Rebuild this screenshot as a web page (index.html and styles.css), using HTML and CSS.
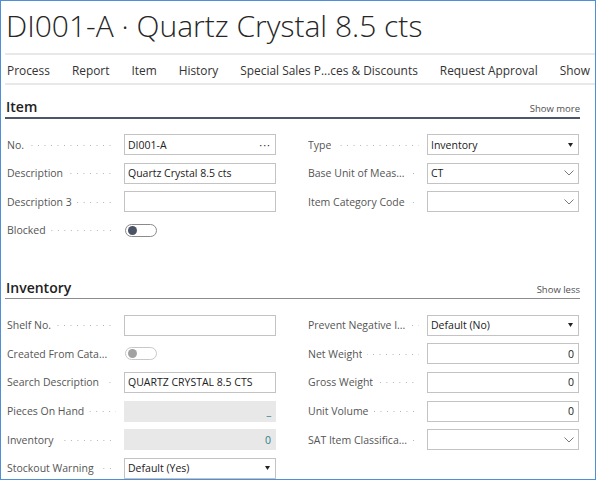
FILE: index.html
```html
<!DOCTYPE html>
<html>
<head>
<meta charset="utf-8">
<link rel="stylesheet" href="styles.css">
</head>
<body>
<div class="frame">
  <h1 class="title">DI001-A · Quartz Crystal 8.5 cts</h1>
  <nav class="menu">
    <span>Process</span><span>Report</span><span>Item</span><span>History</span><span>Special Sales P...ces &amp; Discounts</span><span>Request Approval</span><span>Show</span>
  </nav>

  <section class="sec">
    <div class="sec-head active"><span class="sec-title">Item</span><span class="sec-link">Show more</span></div>
    <div class="fields">
      <div class="col">
        <div class="lbl"><span class="txt">No.</span><i class="dots"></i></div>
        <div class="inp"><span class="val">DI001-A</span><span class="more">···</span></div>
        <div class="lbl"><span class="txt">Description</span><i class="dots"></i></div>
        <div class="inp"><span class="val">Quartz Crystal 8.5 cts</span></div>
        <div class="lbl"><span class="txt">Description 3</span><i class="dots"></i></div>
        <div class="inp"></div>
        <div class="lbl"><span class="txt">Blocked</span><i class="dots"></i></div>
        <div class="tg-cell"><span class="toggle"><span class="knob"></span></span></div>
      </div>
      <div class="col col-r">
        <div class="lbl"><span class="txt">Type</span><i class="dots"></i></div>
        <div class="inp"><span class="val">Inventory</span><svg class="tri" width="5" height="4" viewBox="0 0 5 4"><polygon points="0,0 5,0 2.5,4" fill="#222"/></svg></div>
        <div class="lbl"><span class="txt">Base Unit of Meas...</span><i class="dots"></i></div>
        <div class="inp"><span class="val">CT</span><svg class="chev" width="10" height="6" viewBox="0 0 10 6"><polyline points="0.5,0.5 5,5 9.5,0.5" fill="none" stroke="#7a7a7a" stroke-width="1"/></svg></div>
        <div class="lbl"><span class="txt">Item Category Code</span><i class="dots"></i></div>
        <div class="inp"><span class="val"></span><svg class="chev" width="10" height="6" viewBox="0 0 10 6"><polyline points="0.5,0.5 5,5 9.5,0.5" fill="none" stroke="#7a7a7a" stroke-width="1"/></svg></div>
      </div>
    </div>
  </section>

  <section class="sec sec-inv">
    <div class="sec-head"><span class="sec-title">Inventory</span><span class="sec-link">Show less</span></div>
    <div class="fields">
      <div class="col">
        <div class="lbl"><span class="txt">Shelf No.</span><i class="dots"></i></div>
        <div class="inp"></div>
        <div class="lbl"><span class="txt">Created From Cata...</span><i class="dots"></i></div>
        <div class="tg-cell"><span class="toggle off"><span class="knob"></span></span></div>
        <div class="lbl"><span class="txt">Search Description</span><i class="dots"></i></div>
        <div class="inp"><span class="val">QUARTZ CRYSTAL 8.5 CTS</span></div>
        <div class="lbl"><span class="txt">Pieces On Hand</span><i class="dots"></i></div>
        <div class="inp ro"><span class="val">_</span></div>
        <div class="lbl"><span class="txt">Inventory</span><i class="dots"></i></div>
        <div class="inp ro"><span class="val">0</span></div>
        <div class="lbl"><span class="txt">Stockout Warning</span><i class="dots"></i></div>
        <div class="inp"><span class="val">Default (Yes)</span><svg class="tri" width="5" height="4" viewBox="0 0 5 4"><polygon points="0,0 5,0 2.5,4" fill="#222"/></svg></div>
      </div>
      <div class="col col-r">
        <div class="lbl"><span class="txt">Prevent Negative I...</span><i class="dots"></i></div>
        <div class="inp"><span class="val">Default (No)</span><svg class="tri" width="5" height="4" viewBox="0 0 5 4"><polygon points="0,0 5,0 2.5,4" fill="#222"/></svg></div>
        <div class="lbl"><span class="txt">Net Weight</span><i class="dots"></i></div>
        <div class="inp num"><span class="val">0</span></div>
        <div class="lbl"><span class="txt">Gross Weight</span><i class="dots"></i></div>
        <div class="inp num"><span class="val">0</span></div>
        <div class="lbl"><span class="txt">Unit Volume</span><i class="dots"></i></div>
        <div class="inp num"><span class="val">0</span></div>
        <div class="lbl"><span class="txt">SAT Item Classifica...</span><i class="dots"></i></div>
        <div class="inp"><span class="val"></span><svg class="chev" width="10" height="6" viewBox="0 0 10 6"><polyline points="0.5,0.5 5,5 9.5,0.5" fill="none" stroke="#7a7a7a" stroke-width="1"/></svg></div>
      </div>
    </div>
  </section>
</div>
</body>
</html>
```
FILE: styles.css
```css
html, body {
  margin: 0;
  padding: 0;
  background: #fff;
}
body {
  font-family: "Open Sans", "Noto Sans", sans-serif;
  color: #212121;
}
.frame {
  width: 596px;
  height: 480px;
  box-sizing: border-box;
  border: 1px solid #4f8fd6;
  overflow: hidden;
  background: #fff;
}
.title {
  margin: 0 0 0 4px;
  padding-left: 1px;
  height: 52px;
  line-height: 50px;
  font-size: 30px;
  font-weight: 300;
  color: #262626;
  white-space: nowrap;
  border-bottom: 2px solid #e8e8e8;
}
.menu {
  margin-left: 4px;
  padding: 2px 0 0 2px;
  height: 26px;
  line-height: 26px;
  display: flex;
  gap: 22px;
  font-size: 11.9px;
  color: #333;
  white-space: nowrap;
  border-bottom: 2px solid #e8e8e8;
}
.sec {
  margin: 0 15px 0 4px;
}
.sec-head {
  display: flex;
  justify-content: space-between;
  align-items: baseline;
  padding: 12px 0 0 1px;
  height: 20px;
  line-height: 20px;
  border-bottom: 1px solid #8c8c8c;
}
.sec-head.active {
  border-bottom: 2px solid #4d5668;
}
.sec-title {
  font-size: 14px;
  font-weight: 600;
  color: #212121;
}
.sec-link {
  font-size: 9.5px;
  color: #505050;
}
.sec-inv {
  margin-top: 25px;
}
.fields {
  display: flex;
  gap: 32px;
  margin-top: 15px;
  padding-left: 2px;
}
.sec-inv .fields {
  margin-top: 16px;
}
.col {
  display: grid;
  grid-template-columns: 117px 152px;
  grid-auto-rows: 21px;
  row-gap: 7.6px;
}
.col-r {
  grid-template-columns: 119px 152px;
}
.lbl {
  display: flex;
  align-items: center;
  font-size: 10.5px;
  color: #555;
  min-width: 0;
}
.lbl .txt {
  white-space: nowrap;
  overflow: hidden;
  flex: 0 1 auto;
}
.dots {
  flex: 1 1 auto;
  height: 1px;
  margin: 1px 8px 0 5px;
  min-width: 0;
  background-image: linear-gradient(to right, #b0b0b0 1px, transparent 1px);
  background-size: 6.5px 1px;
  background-position: right center;
  background-repeat: repeat-x;
}
.inp {
  box-sizing: border-box;
  height: 21px;
  border: 1px solid #c3c3c3;
  background: #fff;
  display: flex;
  align-items: center;
  justify-content: space-between;
  padding: 0 4px 0 3px;
  font-size: 10.5px;
  color: #212121;
  white-space: nowrap;
  overflow: hidden;
}
.inp.num,
.inp.ro {
  justify-content: flex-end;
}
.inp.ro {
  background: #e8e8e8;
  border-color: #e8e8e8;
  color: #2e8188;
}
.more {
  font-size: 11px;
  letter-spacing: 1px;
  color: #333;
}
.tri {
  margin-right: 1px;
}
.chev {
  margin-right: 0;
}
.tg-cell {
  display: flex;
  align-items: center;
}
.toggle {
  box-sizing: border-box;
  width: 32px;
  height: 13px;
  border: 1px solid #8a8a8a;
  border-radius: 7px;
  display: flex;
  align-items: center;
  padding-left: 2px;
  margin-left: 1px;
}
.knob {
  width: 9px;
  height: 9px;
  border-radius: 50%;
  background: #4b5467;
}
.toggle.off {
  border-color: #c8c8c8;
}
.toggle.off .knob {
  background: #a2a2a2;
}
```
